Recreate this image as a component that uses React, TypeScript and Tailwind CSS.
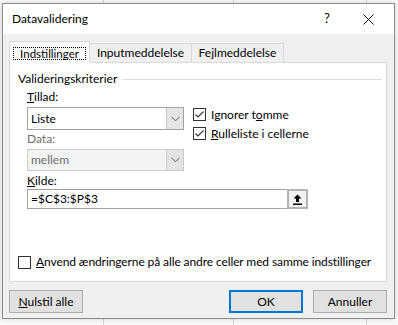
import { ReactNode } from 'react';

const font = { fontFamily: 'Lato, "Noto Sans", Arial, sans-serif' };

function Chevron({ color = '#606060' }: { color?: string }) {
  return (
    <svg width="9" height="6" viewBox="0 0 9 6">
      <path d="M0.5 0.8 L4.5 4.8 L8.5 0.8" fill="none" stroke={color} strokeWidth="1" />
    </svg>
  );
}

function Check({ checked }: { checked: boolean }) {
  return (
    <span className="w-[13px] h-[13px] border border-[#333333] bg-white flex items-center justify-center shrink-0">
      {checked && (
        <svg width="11" height="11" viewBox="0 0 11 11">
          <path d="M1.5 5.5 L4 8 L9.5 2.5" fill="none" stroke="#333333" strokeWidth="1.1" />
        </svg>
      )}
    </span>
  );
}

function Btn({ children, primary }: { children: ReactNode; primary?: boolean }) {
  return (
    <div
      className={
        'w-[74px] h-[23px] flex items-center justify-center bg-[#e1e1e1] text-[12px] text-black ' +
        (primary ? 'border-2 border-[#0078d7]' : 'border border-[#adadad]')
      }
    >
      {children}
    </div>
  );
}

export default function App() {
  return (
    <div
      className="w-[398px] h-[325px] overflow-hidden pl-[2px] pt-[3px] bg-[#fbfbfb] bg-[linear-gradient(to_right,transparent_103px,#d6d6d6_103px,#d6d6d6_104px,transparent_104px,transparent_233px,#d6d6d6_233px,#d6d6d6_234px,transparent_234px,transparent_366px,#d6d6d6_366px,#d6d6d6_367px,transparent_367px)]"
      style={font}
    >
      <div className="w-[393px] h-[316px] border border-[#8c8c8c] bg-[#f0f0f0] flex flex-col shadow-[0_0_6px_rgba(0,0,0,0.18)]">
        {/* Title bar */}
        <div className="h-[30px] bg-white flex items-center pl-[9px] text-[12px] text-black shrink-0">
          <span className="flex-1">Datavalidering</span>
          <span className="w-[12px] text-center mr-[30px] text-[13px]">?</span>
          <span className="mr-[20px] flex items-center">
            <svg width="11" height="11" viewBox="0 0 11 11">
              <path d="M0.5 0.5 L10.5 10.5 M10.5 0.5 L0.5 10.5" stroke="#111" strokeWidth="1" />
            </svg>
          </span>
        </div>

        {/* Body */}
        <div className="flex-1 pl-[6px] pr-[6px] pt-[7px]">
          {/* Tabs */}
          <div className="flex items-end h-[21px] text-[12px] text-black">
            <div className="relative z-10 w-[81px] h-[22px] -mb-px bg-white border border-b-0 border-[#d9d9d9] flex items-start pl-[3px] pt-[5px]">
              <span className="w-[73px] h-[13px] flex items-center justify-center whitespace-nowrap border border-dotted border-black text-[11.5px] leading-none">Indstillinger</span>
            </div>
            <div className="w-[102px] h-[19px] border-t border-r border-[#d9d9d9] flex items-center justify-center">
              Inputmeddelelse
            </div>
            <div className="w-[92px] h-[19px] border-t border-r border-[#d9d9d9] flex items-center justify-center">
              Fejlmeddelelse
            </div>
          </div>

          {/* Panel */}
          <div className="w-[378px] h-[220px] bg-white border border-[#d9d9d9] flex flex-col text-[12px] text-black">
            <div className="flex items-center pl-[8px] pr-[4px] mt-[8px] h-[16px]">
              <span>Valideringskriterier</span>
              <div className="flex-1 h-px bg-[#dcdcdc] ml-[6px]" />
            </div>

            <div className="flex pl-[17px] mt-[2px]">
              <div className="flex flex-col w-[157px]">
                <div className="h-[16px] leading-[16px]"><span className="underline">T</span>illad:</div>
                <div className="mt-[2px] h-[23px] border border-[#a2a2a2] flex">
                  <span className="flex-1 pl-[3px] leading-[21px]">Liste</span>
                  <span className="w-[17px] bg-[#e6e6e6] border-l border-[#c8c8c8] flex items-center justify-center">
                    <Chevron />
                  </span>
                </div>
                <div className="h-[16px] leading-[16px] mt-[1px] text-[#6d6d6d]">Data:</div>
                <div className="mt-[2px] h-[22px] border border-[#cccccc] bg-[#f3f3f3] flex">
                  <span className="flex-1 pl-[3px] leading-[20px] text-[#6d6d6d]">mellem</span>
                  <span className="w-[17px] bg-[#e3e3e3] border-l border-[#cccccc] flex items-center justify-center">
                    <Chevron />
                  </span>
                </div>
              </div>
              <div className="flex flex-col ml-[9px] mt-[19px] gap-[6px]">
                <div className="flex items-center gap-[5px] h-[13px]">
                  <Check checked />
                  <span>Ignorer t<span className="underline">o</span>mme</span>
                </div>
                <div className="flex items-center gap-[5px] h-[13px]">
                  <Check checked />
                  <span><span className="underline">R</span>ulleliste i cellerne</span>
                </div>
              </div>
            </div>

            <div className="pl-[17px] mt-[2px]">
              <div className="h-[16px] leading-[16px]"><span className="underline">K</span>ilde:</div>
              <div className="flex w-[281px] h-[20px]">
                <div className="flex-1 border border-r-0 border-[#a2a2a2] pl-[3px] leading-[18px]">=$C$3:$P$3</div>
                <div className="w-[21px] border-2 border-[#b4b4b4] bg-[#f2f2f2] flex items-center justify-center">
                  <svg width="9" height="11" viewBox="0 0 9 11">
                    <path d="M4.5 0.5 L8.5 4.5 L6 4.5 L6 8 L3 8 L3 4.5 L0.5 4.5 Z" fill="#000" />
                    <rect x="0" y="9.5" width="9" height="1.5" fill="#000" />
                  </svg>
                </div>
              </div>
            </div>

            <div className="flex-1" />
            <div className="flex items-center gap-[5px] pl-[8px] mb-[10px] whitespace-nowrap">
              <span className="w-[13px] h-[13px] border border-[#333333] bg-white shrink-0" />
              <span className="tracking-[-0.1px]"><span className="underline">A</span>nvend ændringerne på alle andre celler med samme indstillinger</span>
            </div>
          </div>

          {/* Buttons */}
          <div className="flex mt-[8px] w-[378px]">
            <Btn><span><span className="underline">N</span>ulstil alle</span></Btn>
            <div className="flex-1" />
            <Btn primary>OK</Btn>
            <div className="w-[10px]" />
            <Btn>Annuller</Btn>
          </div>
        </div>
      </div>
    </div>
  );
}
